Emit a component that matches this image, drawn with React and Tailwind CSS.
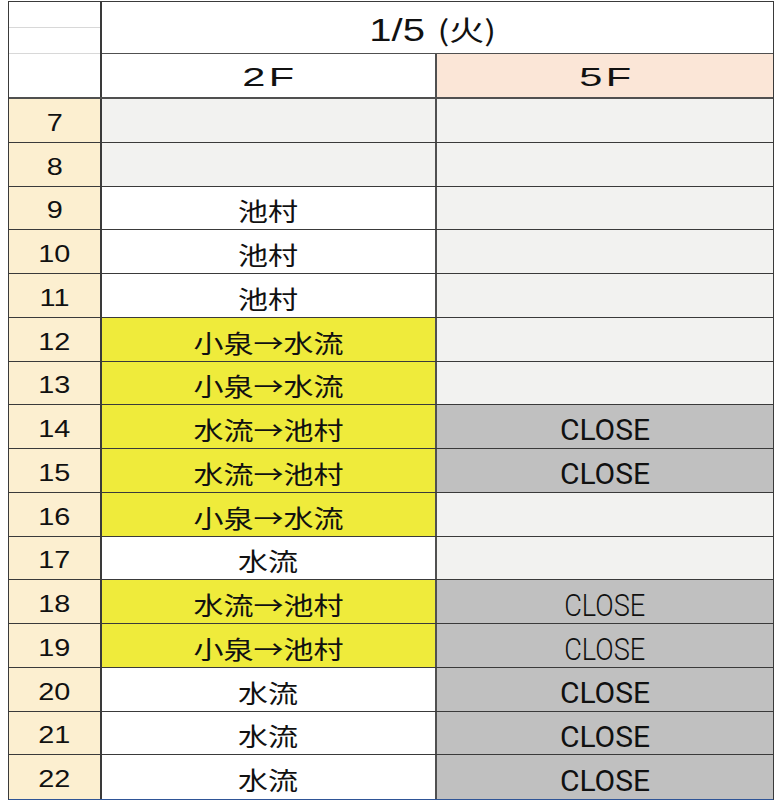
import React from 'react';

const rows = [
  { n: '7',  h: 'h-[44px]', a: '',         ab: 'bg-[#f2f2f0]', b: '',      bb: 'bg-[#f2f2f0]' },
  { n: '8',  h: 'h-[44px]', a: '',         ab: 'bg-[#f2f2f0]', b: '',      bb: 'bg-[#f2f2f0]' },
  { n: '9',  h: 'h-[43px]', a: '池村',      ab: 'bg-white',     b: '',      bb: 'bg-[#f2f2f0]' },
  { n: '10', h: 'h-[44px]', a: '池村',      ab: 'bg-white',     b: '',      bb: 'bg-[#f2f2f0]' },
  { n: '11', h: 'h-[44px]', a: '池村',      ab: 'bg-white',     b: '',      bb: 'bg-[#f2f2f0]' },
  { n: '12', h: 'h-[44px]', a: '小泉→水流', ab: 'bg-[#efeb3b]', b: '',      bb: 'bg-[#f2f2f0]' },
  { n: '13', h: 'h-[43px]', a: '小泉→水流', ab: 'bg-[#efeb3b]', b: '',      bb: 'bg-[#f2f2f0]' },
  { n: '14', h: 'h-[44px]', a: '水流→池村', ab: 'bg-[#efeb3b]', b: 'CLOSE', bb: 'bg-[#c0c0c0]' },
  { n: '15', h: 'h-[44px]', a: '水流→池村', ab: 'bg-[#efeb3b]', b: 'CLOSE', bb: 'bg-[#c0c0c0]' },
  { n: '16', h: 'h-[44px]', a: '小泉→水流', ab: 'bg-[#efeb3b]', b: '',      bb: 'bg-[#f2f2f0]' },
  { n: '17', h: 'h-[43px]', a: '水流',      ab: 'bg-white',     b: '',      bb: 'bg-[#f2f2f0]' },
  { n: '18', h: 'h-[44px]', a: '水流→池村', ab: 'bg-[#efeb3b]', b: 'CLOSE', bb: 'bg-[#c0c0c0]', thin: true },
  { n: '19', h: 'h-[44px]', a: '小泉→池村', ab: 'bg-[#efeb3b]', b: 'CLOSE', bb: 'bg-[#c0c0c0]', thin: true },
  { n: '20', h: 'h-[44px]', a: '水流',      ab: 'bg-white',     b: 'CLOSE', bb: 'bg-[#c0c0c0]' },
  { n: '21', h: 'h-[43px]', a: '水流',      ab: 'bg-white',     b: 'CLOSE', bb: 'bg-[#c0c0c0]' },
  { n: '22', h: 'h-[44px]', a: '水流',      ab: 'bg-white',     b: 'CLOSE', bb: 'bg-[#c0c0c0]' },
];

const jp = "font-['Noto_Sans_CJK_JP',sans-serif]";
const sans = "font-['Liberation_Sans',sans-serif]";

export default function App() {
  return (
    <div className="w-[780px] h-[800px] bg-white pt-[1px] pl-[8px] overflow-hidden">
      <div className="w-[766px] border-l border-t border-r border-[#3a3a3a] border-b-2 border-b-[#2f5597]">

        {/* Header */}
        <div className="flex border-b-2 border-[#505050]">
          <div className="w-[93px] shrink-0 border-r-2 border-[#3a3a3a] flex flex-col">
            <div className="h-[26px] border-b border-[#d8d8d8]" />
            <div className="h-[26px] border-b border-[#d8d8d8]" />
            <div className="h-[43px]" />
          </div>
          <div className="flex-1 flex flex-col">
            <div className="h-[52px] border-b border-[#505050] flex items-center justify-center pt-[4px] text-[#111]">
              <span className="inline-block scale-x-[1.25] whitespace-nowrap pr-[8px]">
                <span className={`${sans} text-[32px]`}>1/5</span>
                <span className={`${jp} text-[28px] ml-[10px]`}>(火)</span>
              </span>
            </div>
            <div className="flex h-[43px]">
              <div className="w-[335px] border-r-2 border-[#505050] flex items-center justify-center pt-[3px] text-[#111]">
                <span className={`inline-block ${sans} text-[26px] tracking-[2px] scale-x-[1.6] pl-[2px]`}>2F</span>
              </div>
              <div className="flex-1 bg-[#fbe6d7] flex items-center justify-center pt-[3px] text-[#111]">
                <span className={`inline-block ${sans} text-[26px] tracking-[2px] scale-x-[1.6] pl-[2px]`}>5F</span>
              </div>
            </div>
          </div>
        </div>

        {/* Body */}
        {rows.map((r) => (
          <div key={r.n} className={`flex ${r.h} border-b border-[#3a3a3a] last:border-b-0`}>
            <div className="w-[93px] shrink-0 bg-[#fcefd0] border-r-2 border-[#3a3a3a] flex items-center justify-center pt-[4px] text-[#111]">
              <span className={`inline-block ${sans} text-[24px] scale-x-[1.2]`}>{r.n}</span>
            </div>
            <div className={`w-[335px] shrink-0 ${r.ab} border-r-2 border-[#505050] flex items-center justify-center pt-[6px] text-[#111]`}>
              <span className={`inline-block ${jp} text-[25px] scale-x-[1.2] whitespace-nowrap`}>{r.a}</span>
            </div>
            <div className={`flex-1 ${r.bb} flex items-center justify-center pt-[6px]`}>
              {r.b && (
                r.thin ? (
                  <span className="inline-block font-['Roboto',sans-serif] font-light text-[32px] text-[#111] scale-x-[0.85]">{r.b}</span>
                ) : (
                  <span className="inline-block font-['Roboto',sans-serif] text-[30px] text-[#111]">{r.b}</span>
                )
              )}
            </div>
          </div>
        ))}
      </div>
    </div>
  );
}
